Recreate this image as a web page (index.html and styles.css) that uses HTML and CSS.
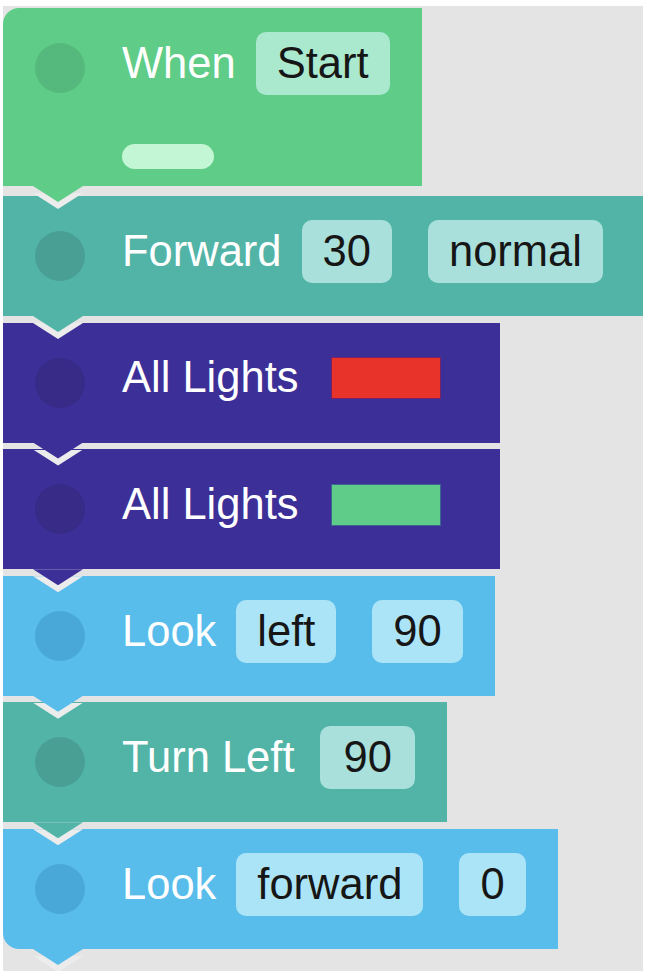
FILE: index.html
```html
<!DOCTYPE html>
<html lang="en">
<head>
    <meta charset="UTF-8">
    <meta name="viewport" content="width=device-width, initial-scale=1.0">
    <title>Blocks</title>
    <link rel="stylesheet" href="styles.css">
</head>
<body>
    <div class="canvas">
        <div class="block hat green">
            <div class="row">
                <span class="dot"></span>
                <div class="line">
                    <span class="label">When</span>
                    <span class="field">Start</span>
                </div>
            </div>
            <div class="bar"></div>
        </div>

        <div class="block teal wide">
            <div class="row">
                <span class="dot"></span>
                <div class="line">
                    <span class="label">Forward</span>
                    <span class="field">30</span>
                    <span class="field">normal</span>
                </div>
            </div>
        </div>

        <div class="block purple">
            <div class="row">
                <span class="dot"></span>
                <div class="line">
                    <span class="label">All Lights</span>
                    <span class="swatch red"></span>
                </div>
            </div>
        </div>

        <div class="block purple">
            <div class="row">
                <span class="dot"></span>
                <div class="line">
                    <span class="label">All Lights</span>
                    <span class="swatch lime"></span>
                </div>
            </div>
        </div>

        <div class="block blue">
            <div class="row">
                <span class="dot"></span>
                <div class="line">
                    <span class="label">Look</span>
                    <span class="field">left</span>
                    <span class="field">90</span>
                </div>
            </div>
        </div>

        <div class="block teal">
            <div class="row">
                <span class="dot"></span>
                <div class="line">
                    <span class="label">Turn Left</span>
                    <span class="field turn">90</span>
                </div>
            </div>
        </div>

        <div class="block blue last">
            <div class="row">
                <span class="dot"></span>
                <div class="line">
                    <span class="label">Look</span>
                    <span class="field">forward</span>
                    <span class="field">0</span>
                </div>
            </div>
        </div>
    </div>
</body>
</html>
```

FILE: styles.css
```css
body {
    margin: 0;
    background: #fff;
    font-family: "Liberation Sans", Arial, sans-serif;
}
.canvas {
    margin: 6px 0 0 3px;
    width: 640px;
    height: 965px;
    padding-top: 2px;
    box-sizing: border-box;
    background: #e4e4e4;
    display: flex;
    flex-direction: column;
    align-items: flex-start;
    overflow: hidden;
}
.block {
    position: relative;
    margin-top: 6.6px;
}
.block.hat {
    margin-top: 0;
    margin-bottom: 3.4px;
    border-top-left-radius: 16px;
}
.block.last {
    border-bottom-left-radius: 16px;
}
.block.wide .row {
    padding-right: 40px;
}
/* tab under each block, with the light groove around it */
.block::before,
.block::after {
    content: '';
    position: absolute;
    left: 30px;
    width: 50px;
    height: 16px;
    clip-path: polygon(0 0, 100% 0, 50% 100%);
}
.block::before {
    top: calc(100% + 7px);
    background: #ececec;
    z-index: 1;
}
.block::after {
    top: 100%;
    background: inherit;
    z-index: 2;
}
.row {
    display: flex;
    align-items: center;
    height: 120px;
    padding: 0 32px;
}
.dot {
    width: 50px;
    height: 50px;
    border-radius: 50%;
    margin-right: 37px;
    flex-shrink: 0;
}
.line {
    display: flex;
    align-items: center;
    margin-bottom: 9px;
    font-size: 43.5px;
    line-height: 1;
    white-space: nowrap;
}
.label {
    color: #fff;
}
.field {
    display: flex;
    align-items: center;
    height: 63px;
    padding: 0 21px;
    margin-left: 20px;
    border-radius: 10px;
    color: #161616;
}
.field + .field {
    margin-left: 36px;
}
.field.turn {
    margin-left: 26px;
    padding: 0 23px;
}
.swatch {
    width: 110px;
    height: 42px;
    margin-left: 32px;
    margin-right: 27px;
    box-sizing: border-box;
    border: 1px solid rgba(30, 20, 150, 0.55);
}
.swatch.red {
    background: #e8332a;
}
.swatch.lime {
    background: #5fcd89;
}
.bar {
    width: 92px;
    height: 25px;
    margin: 16px 0 17px 119px;
    border-radius: 13px;
    background: #c3f6d4;
}

.green {
    background: #5fcc88;
}
.green .dot {
    background: #55b97d;
}
.green .field {
    background: #abe9ce;
}
.teal {
    background: #52b4a7;
}
.teal .dot {
    background: #4a9f95;
}
.teal .field {
    background: #a9e0db;
}
.purple {
    background: #3d2f98;
}
.purple .dot {
    background: #382a87;
}
.blue {
    background: #58bdeb;
}
.blue .dot {
    background: #4aa8d8;
}
.blue .field {
    background: #ace4f7;
}
```
